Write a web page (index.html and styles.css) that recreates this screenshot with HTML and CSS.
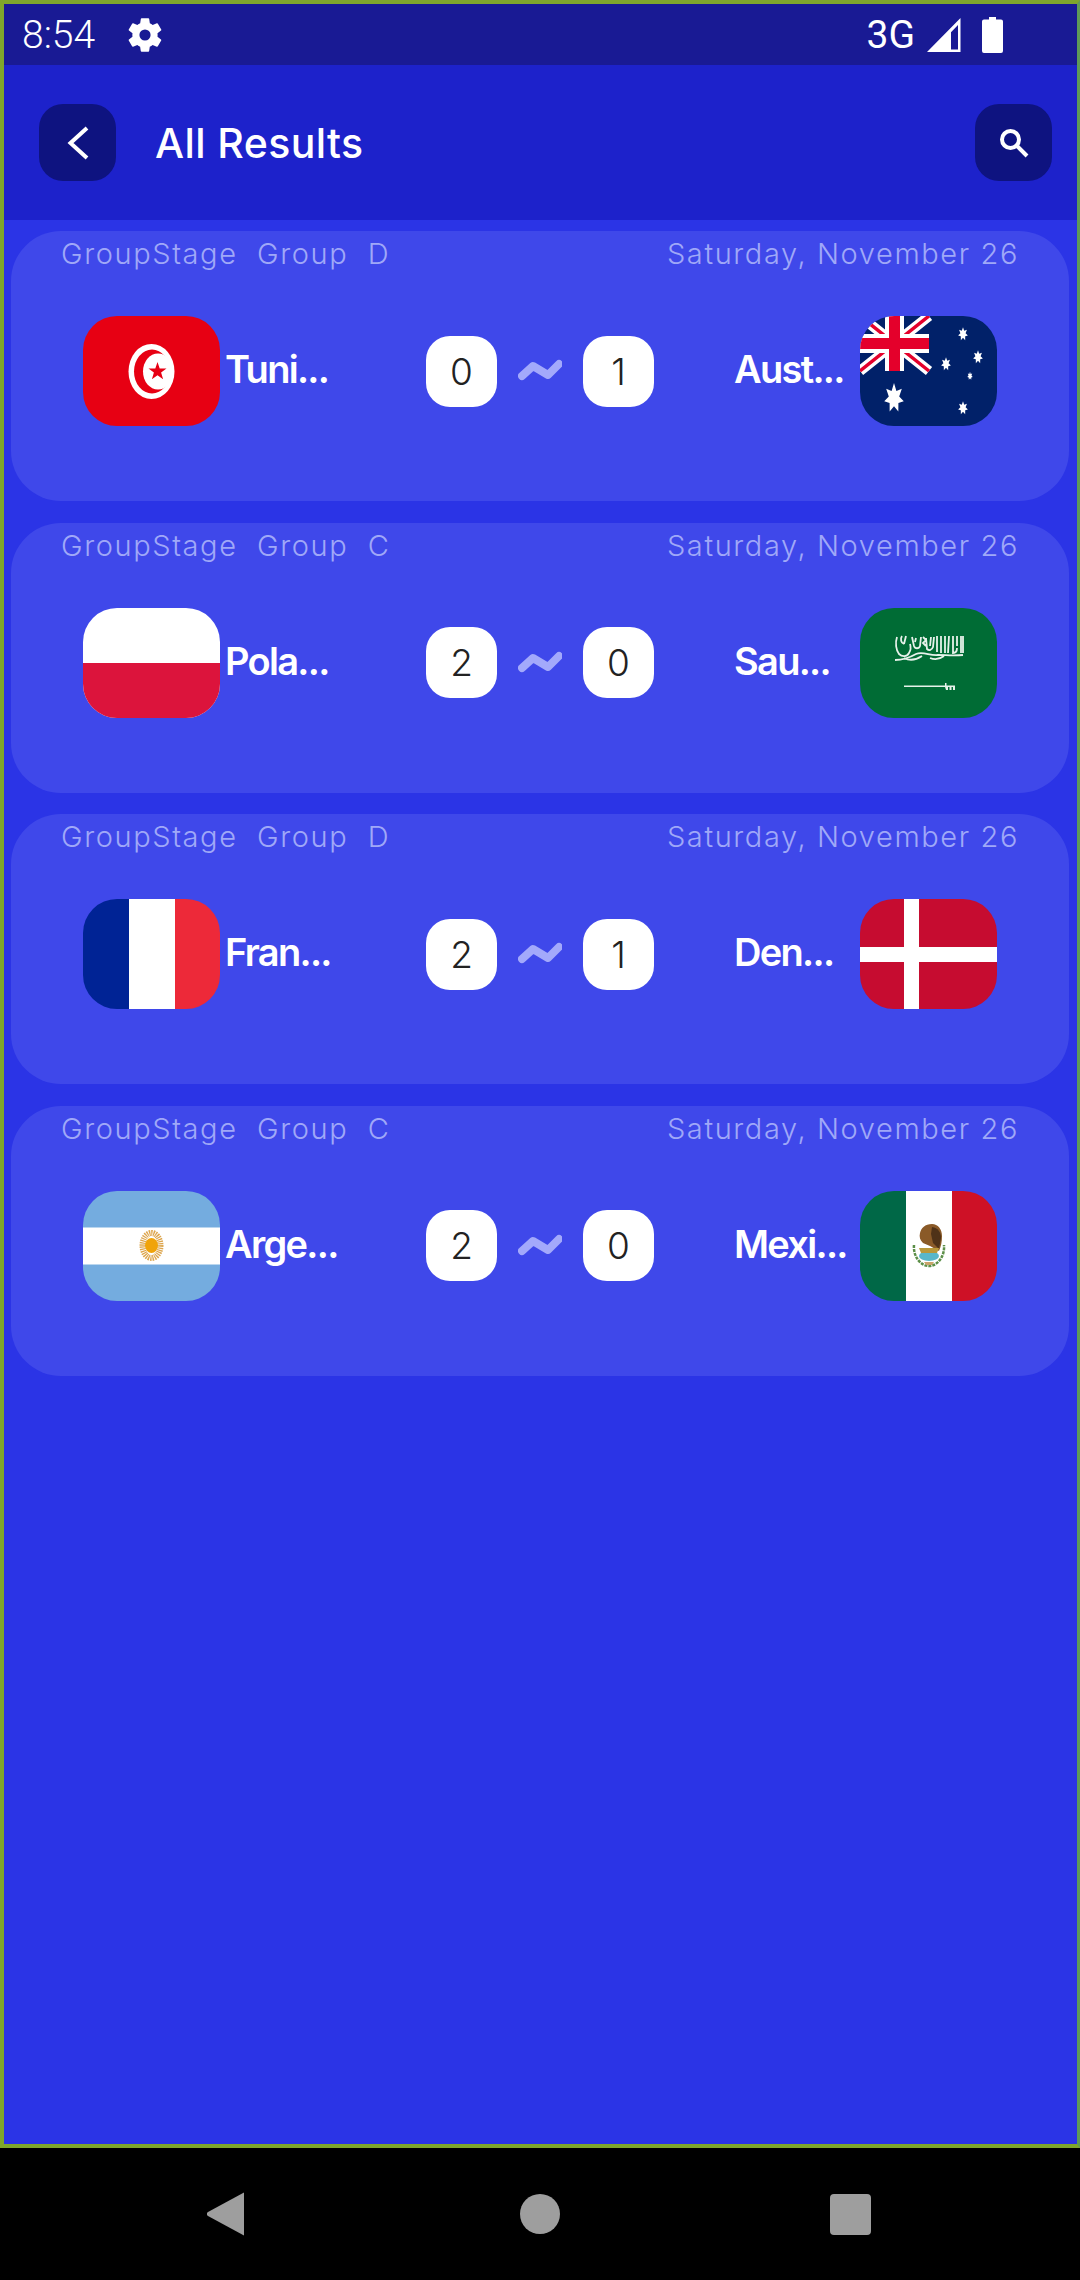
FILE: index.html
```html
<!DOCTYPE html>
<html lang="en">
<head>
<meta charset="utf-8">
<title>All Results</title>
<link rel="stylesheet" href="styles.css">
</head>
<body>
<svg class="defs" width="0" height="0"><defs>
  <path id="star" d="M0-10 2.400-4.600 7.820-6.230 5.200-1 9.750 2.230 4.400 3.400 4.340 9.010 0 5.500-4.340 9.010-4.400 3.400-9.750 2.230-5.200-1-7.820-6.230-2.400-4.600Z"/>
  <path id="wave" d="M4 17 15 7 30 16 41 5"/>
</defs></svg>
<div class="device">
  <div class="screen">
    <header class="status">
      <div class="status-left">
        <span class="clock">8:54</span>
        <svg class="gear" viewBox="0 0 24 24"><path d="M19.140 12.940c.04-.3.06-.61.06-.94s-.02-.64-.07-.94l2.030-1.580a.49.49 0 0 0 .12-.61l-1.920-3.320a.49.49 0 0 0-.59-.22l-2.390.96a7 7 0 0 0-1.620-.94l-.36-2.540a.48.48 0 0 0-.48-.41h-3.840a.48.48 0 0 0-.47.41l-.36 2.540c-.59.24-1.130.57-1.620.94l-2.390-.96a.49.49 0 0 0-.59.22L2.720 8.870a.48.48 0 0 0 .12.61l2.030 1.580c-.05.3-.09.63-.09.94s.02.64.07.94l-2.030 1.580a.49.49 0 0 0-.12.61l1.920 3.320c.12.22.37.29.59.22l2.390-.96c.5.38 1.030.7 1.620.94l.36 2.540c.05.24.24.41.48.41h3.840c.24 0 .44-.17.47-.41l.36-2.540c.59-.24 1.130-.56 1.620-.94l2.390.96c.22.08.47 0 .59-.22l1.920-3.320a.48.48 0 0 0-.12-.61zM12 15.200a3.200 3.200 0 1 1 0-6.400 3.200 3.200 0 0 1 0 6.400z"/></svg>
      </div>
      <div class="status-right">
        <span class="net">3G</span>
        <svg class="signal" viewBox="0 0 34 34"><path fill-rule="evenodd" d="M33.500 0v34H0zM31 7 24 14.200v17.300h7z"/></svg>
        <svg class="battery" viewBox="0 0 21 36"><path d="M7 0h7v2.500h5a2 2 0 0 1 2 2V34a2 2 0 0 1-2 2H2a2 2 0 0 1-2-2V4.500a2 2 0 0 1 2-2h5z"/></svg>
      </div>
    </header>

    <div class="appbar">
      <button class="icon-btn">
        <svg class="chev" viewBox="0 0 22 34"><path d="M20 2 3.500 17 20 32"/></svg>
      </button>
      <h1 class="title">All Results</h1>
      <button class="icon-btn">
        <svg class="search" viewBox="0 0 30 30"><circle cx="11.500" cy="11.500" r="8.500"/><path d="m18 18 10 10"/></svg>
      </button>
    </div>

    <main class="list">
      <article class="card">
        <div class="meta"><span>GroupStage&nbsp; Group&nbsp; D</span><span>Saturday, November 26</span></div>
        <div class="match">
          <div class="team">
            <svg class="flag" viewBox="0 0 137 110"><rect width="137" height="110" fill="#e70013"/><ellipse cx="68.500" cy="55.500" rx="23" ry="27.500" fill="#fff"/><ellipse cx="69" cy="55.500" rx="18" ry="22" fill="#e70013"/><ellipse cx="75" cy="55.500" rx="15" ry="18" fill="#fff"/><path fill="#e70013" d="m74.500 46 2.200 6.500 6.800.1-5.400 4 2 6.600-5.600-3.900-5.600 3.900 2-6.600-5.400-4 6.800-.1z"/></svg>
            <span class="name">Tuni...</span>
          </div>
          <div class="score-wrap">
            <span class="score">0</span>
            <svg class="tilde" viewBox="0 0 44 24"><use href="#wave"/></svg>
            <span class="score">1</span>
          </div>
          <div class="team team-right">
            <span class="name">Aust...</span>
            <svg class="flag" viewBox="0 0 137 110"><rect width="137" height="110" fill="#012169"/>
              <path stroke="#fff" stroke-width="10" d="M0 0 69 55M69 0 0 55"/>
              <path stroke="#e4002b" stroke-width="3.500" d="M0 0 69 55M69 0 0 55"/>
              <path fill="#fff" d="M0 18h69v19H0zM25 0h19v55H25z"/>
              <path fill="#e4002b" d="M0 22h69v11H0zM29 0h11v55H29z"/>
              <g fill="#fff">
                <use href="#star" transform="translate(34 82) scale(1 1.500)"/>
                <use href="#star" transform="translate(103 18) scale(.5 .68)"/>
                <use href="#star" transform="translate(86 48) scale(.5 .68)"/>
                <use href="#star" transform="translate(118 41) scale(.5 .68)"/>
                <use href="#star" transform="translate(110 60) scale(.28 .42)"/>
                <use href="#star" transform="translate(103 92) scale(.5 .68)"/>
              </g></svg>
          </div>
        </div>
      </article>

      <article class="card">
        <div class="meta"><span>GroupStage&nbsp; Group&nbsp; C</span><span>Saturday, November 26</span></div>
        <div class="match">
          <div class="team">
            <svg class="flag" viewBox="0 0 137 110"><rect width="137" height="110" fill="#fff"/><rect y="55" width="137" height="55" fill="#dc143c"/></svg>
            <span class="name">Pola...</span>
          </div>
          <div class="score-wrap">
            <span class="score">2</span>
            <svg class="tilde" viewBox="0 0 44 24"><use href="#wave"/></svg>
            <span class="score">0</span>
          </div>
          <div class="team team-right">
            <span class="name">Sau...</span>
            <svg class="flag" viewBox="0 0 137 110"><rect width="137" height="110" fill="#006c35"/>
              <g fill="none" stroke="#e6f2ea" stroke-width="1.800">
                <path d="M37 29c-2 6-1 13 2 17 3 3 8 3 10-1 2-3 2-6 1-9M42 28c-2 3-1 7 2 8M46 28l-2 8M52 29l2 9c1 3 5 3 6 0l1-9M56 30l-1 4M63 29l3 3-3 3 3 3M66 30l1 11c2 2 5 1 6-2l1-10M71 29l-1 9M77 28v16M81 28v17M85 28v17M89 28l-1 17M93 28v17c3 0 4-2 4-5M97 28v10M101 28v17M103 28v17"/>
                <path d="M35 52c8 0 14-2 21-6 7-3 14 2 22 1 8 0 15 1 25 0M44 50c6 3 12 2 18-2M70 50c5 2 10 1 14-2"/>
              </g>
              <path fill="#e6f2ea" d="M44 77.500h41v1.500H44zM85 75h1.500v2.500H95V82h-2v-3h-1.500v3h-2v-3H88v3h-2l-1-3z"/>
            </svg>
          </div>
        </div>
      </article>

      <article class="card">
        <div class="meta"><span>GroupStage&nbsp; Group&nbsp; D</span><span>Saturday, November 26</span></div>
        <div class="match">
          <div class="team">
            <svg class="flag" viewBox="0 0 137 110"><rect width="46" height="110" fill="#002395"/><rect x="46" width="46" height="110" fill="#fff"/><rect x="92" width="45" height="110" fill="#ed2939"/></svg>
            <span class="name">Fran...</span>
          </div>
          <div class="score-wrap">
            <span class="score">2</span>
            <svg class="tilde" viewBox="0 0 44 24"><use href="#wave"/></svg>
            <span class="score">1</span>
          </div>
          <div class="team team-right">
            <span class="name">Den...</span>
            <svg class="flag" viewBox="0 0 137 110"><rect width="137" height="110" fill="#c60c30"/><path fill="#fff" d="M44 0h15v110H44zM0 48h137v15H0z"/></svg>
          </div>
        </div>
      </article>

      <article class="card">
        <div class="meta"><span>GroupStage&nbsp; Group&nbsp; C</span><span>Saturday, November 26</span></div>
        <div class="match">
          <div class="team">
            <svg class="flag" viewBox="0 0 137 110"><rect width="137" height="110" fill="#74acdf"/><rect y="36.500" width="137" height="37" fill="#fff"/>
              <ellipse cx="68.500" cy="54.500" rx="9" ry="12.500" fill="none" stroke="#dda64f" stroke-width="6" stroke-dasharray="1.300 .8"/><ellipse cx="68.500" cy="54.500" rx="6.500" ry="7.500" fill="#f0a30a"/></svg>
            <span class="name">Arge...</span>
          </div>
          <div class="score-wrap">
            <span class="score">2</span>
            <svg class="tilde" viewBox="0 0 44 24"><use href="#wave"/></svg>
            <span class="score">0</span>
          </div>
          <div class="team team-right">
            <span class="name">Mexi...</span>
            <svg class="flag" viewBox="0 0 137 110"><rect width="46" height="110" fill="#006847"/><rect x="46" width="46" height="110" fill="#fff"/><rect x="92" width="45" height="110" fill="#ce1126"/>
              <path fill="#8a5a28" d="M60 42c1-5 5-9 12-9 6 0 10 5 10 12 0 6-1 10-3 15l-9-5-7-3c-3-3-4-6-3-10z"/>
              <path fill="#4f3218" d="M72 36c6 1 9 5 9 11l-2 11-6-6-2-9z"/>
              <path fill="none" stroke="#5c8f48" stroke-width="2.500" stroke-dasharray="3 1" d="M54 54c-1 12 7 21 15 21s16-9 15-21"/>
              <ellipse cx="69" cy="65" rx="10" ry="5" fill="#58b7c9"/>
              <path fill="#b9983a" d="M59 57h20l-2 5H61z"/>
              <path fill="#c9a36a" d="M64 71h10l-2 3h-6z"/>
            </svg>
          </div>
        </div>
      </article>
    </main>
  </div>

  <nav class="navbar">
    <svg class="nav-back" viewBox="0 0 38 44"><path d="M37 .5v43L1 24c-1.500-1-1.500-3 0-4z"/></svg>
    <span class="nav-home"></span>
    <span class="nav-recent"></span>
  </nav>
</div>
</body>
</html>
```

FILE: styles.css
```css
* { box-sizing: border-box; }
html, body { margin: 0; padding: 0; }
body { width: 1080px; height: 2280px; background: #000; font-family: "Inter", "Liberation Sans", sans-serif; overflow: hidden; }
.defs { display: block; height: 0; }
.device { width: 1080px; height: 2280px; display: flex; flex-direction: column; background: #000; }
.screen { height: 2148px; display: flex; flex-direction: column; background: #2b34e6; border: 4px solid #7fa62c; border-right-width: 3px; border-right-color: #5f9a58; }
.status { height: 61px; flex: none; background: #191a94; display: flex; justify-content: space-between; align-items: center; padding: 0 74px 0 18px; color: #fff; }
.status-left { display: flex; align-items: center; gap: 29px; }
.clock { font-family: "Roboto", sans-serif; font-size: 39px; font-weight: 300; line-height: 44px; }
.gear { width: 42px; height: 42px; fill: #fff; }
.status-right { display: flex; align-items: center; }
.net { font-family: "Roboto", sans-serif; font-size: 39px; line-height: 44px; margin-right: 12px; }
.signal { width: 34px; height: 34px; fill: #fff; margin-right: 21px; }
.battery { width: 21px; height: 36px; fill: #fff; }

.appbar { height: 155px; flex: none; background: #1d22cb; display: flex; align-items: center; padding: 0 25px 0 35px; }
.icon-btn { width: 77px; height: 77px; flex: none; border: 0; padding: 0; border-radius: 24px; background: #0e1380; display: flex; align-items: center; justify-content: center; }
.chev { width: 22px; height: 34px; fill: none; stroke: #fff; stroke-width: 4; }
.search { width: 30px; height: 30px; fill: none; stroke: #fff; stroke-width: 4; }
.title { flex: 1; margin: 0 0 0 39px; font-size: 41px; font-weight: 500; letter-spacing: .4px; color: #fff; }

.list { display: flex; flex-direction: column; gap: 21.67px; padding: 11px 8px 0 7px; }
.card { height: 270px; background: #3f48ea; border-radius: 50px; padding: 3px 50px 0; }
.meta { display: flex; justify-content: space-between; color: #a0a8f8; font-size: 29px; font-weight: 300; line-height: 40px; letter-spacing: 1.600px; }
.match { display: grid; grid-template-columns: minmax(0, 1fr) auto minmax(0, 1fr); align-items: center; margin: 42px 22px 0; height: 110px; }
.team { display: flex; align-items: center; gap: 5px; min-width: 0; }
.team-right { gap: 0; padding-left: 80px; }
.team-right .name { flex: 1; min-width: 0; }
.flag { width: 137px; height: 110px; flex: none; border-radius: 34px; }
.name { color: #fff; font-size: 38px; font-weight: 600; letter-spacing: -1.700px; margin-top: -4px; white-space: nowrap; }
.score-wrap { display: flex; align-items: center; gap: 21px; }
.score { width: 71px; height: 71px; background: #fff; border-radius: 24px; display: flex; align-items: center; justify-content: center; color: #222; font-size: 37px; font-weight: 300; }
.tilde { width: 44px; height: 24px; fill: none; stroke: #a3a9fb; stroke-width: 8; stroke-linejoin: round; stroke-linecap: round; }

.navbar { flex: 1; display: flex; align-items: center; background: #000; padding: 0 209px 0 207px; justify-content: space-between; }
.nav-back { width: 38px; height: 44px; fill: #9e9e9e; margin-right: 5px; }
.nav-home { width: 40px; height: 40px; border-radius: 50%; background: #9e9e9e; }
.nav-recent { width: 41px; height: 41px; border-radius: 4px; background: #9e9e9e; }
```
